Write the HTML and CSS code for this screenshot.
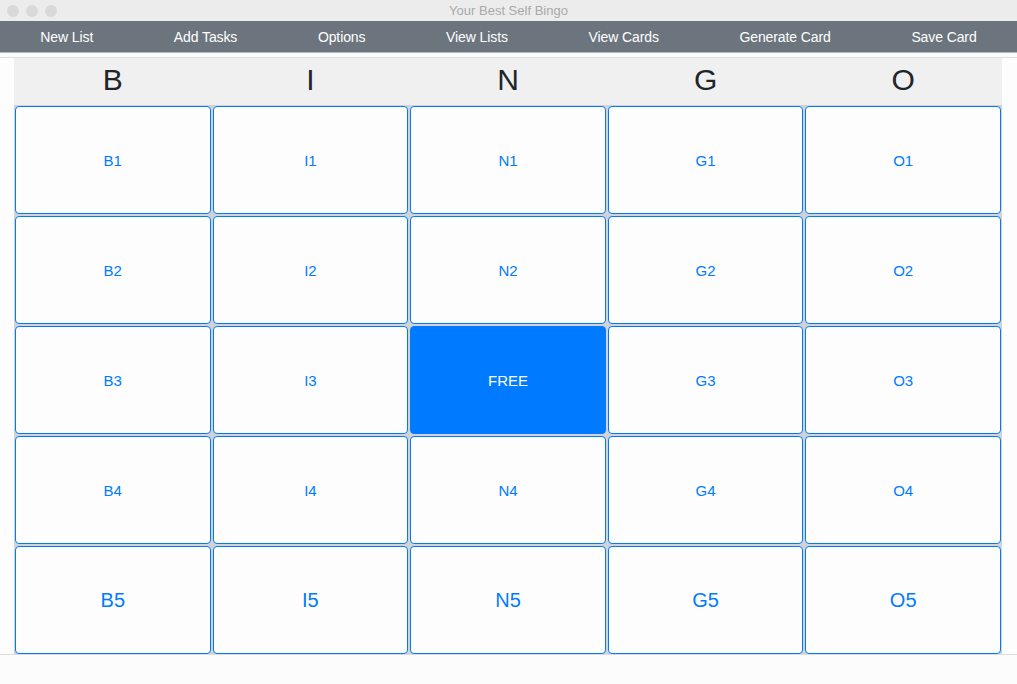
FILE: index.html
```html
<!DOCTYPE html>
<html>
	<head>
		<title>Your Best Self Bingo</title>
		<link rel="stylesheet" href="styles.css">
	</head>
	<body>
		<div class="titlebar">
			<span class="light"></span><span class="light"></span><span class="light"></span>
			<span class="title">Your Best Self Bingo</span>
		</div>
		<div class="nav">
			<span>New List</span>
			<span>Add Tasks</span>
			<span>Options</span>
			<span>View Lists</span>
			<span>View Cards</span>
			<span>Generate Card</span>
			<span>Save Card</span>
		</div>
		<div class="page">
			<div class="board">
				<div class="letters">
					<span>B</span><span>I</span><span>N</span><span>G</span><span>O</span>
				</div>
				<div class="grid">
					<div class="cell">B1</div><div class="cell">I1</div><div class="cell">N1</div><div class="cell">G1</div><div class="cell">O1</div>
					<div class="cell">B2</div><div class="cell">I2</div><div class="cell">N2</div><div class="cell">G2</div><div class="cell">O2</div>
					<div class="cell">B3</div><div class="cell">I3</div><div class="cell free">FREE</div><div class="cell">G3</div><div class="cell">O3</div>
					<div class="cell">B4</div><div class="cell">I4</div><div class="cell">N4</div><div class="cell">G4</div><div class="cell">O4</div>
					<div class="cell big">B5</div><div class="cell big">I5</div><div class="cell big">N5</div><div class="cell big">G5</div><div class="cell big">O5</div>
				</div>
			</div>
		</div>
	</body>
</html>
```

FILE: styles.css
```css
body {
	margin: 0;
	font-family: "Liberation Sans", Arial, sans-serif;
	background-color: #fcfcfc;
}
.titlebar {
	position: relative;
	height: 21px;
	background-color: #ececec;
	display: flex;
	align-items: center;
	padding-left: 7px;
	box-sizing: border-box;
}
.light {
	width: 12px;
	height: 12px;
	border-radius: 50%;
	background-color: #d9d9d9;
	margin-right: 7px;
}
.title {
	position: absolute;
	left: 0;
	right: 0;
	text-align: center;
	font-size: 13px;
	color: #a9a9a9;
}
.nav {
	height: 31px;
	background-color: #6c757d;
	color: white;
	font-size: 14px;
	letter-spacing: -0.1px;
	display: flex;
	justify-content: space-around;
	align-items: center;
	border-bottom: 1px solid #b5b9bd;
}
.page {
	margin-top: 4px;
	border-top: 1px solid #dcdcdc;
	border-bottom: 1px solid #dcdcdc;
	padding: 0 15px 0 14px;
	background-color: #fdfdfd;
}
.letters {
	height: 47px;
	padding-bottom: 3px;
	box-sizing: border-box;
	background-color: #f0f0f0;
	display: grid;
	grid-template-columns: repeat(5, 1fr);
	align-items: center;
	text-align: center;
	font-size: 30px;
	color: #212529;
}
.grid {
	display: grid;
	grid-template-columns: repeat(5, 1fr);
	grid-auto-rows: 108px;
	gap: 2px;
	padding: 1px 1px 0 1px;
	background-color: #d3d3d3;
}
.cell {
	background-color: #fdfdfd;
	border: 1px solid #007bff;
	border-radius: 4px;
	color: #007bff;
	font-size: 15px;
	display: flex;
	align-items: center;
	justify-content: center;
}
.cell.big {
	font-size: 20px;
}
.cell.free {
	background-color: #007bff;
	color: white;
}
```
